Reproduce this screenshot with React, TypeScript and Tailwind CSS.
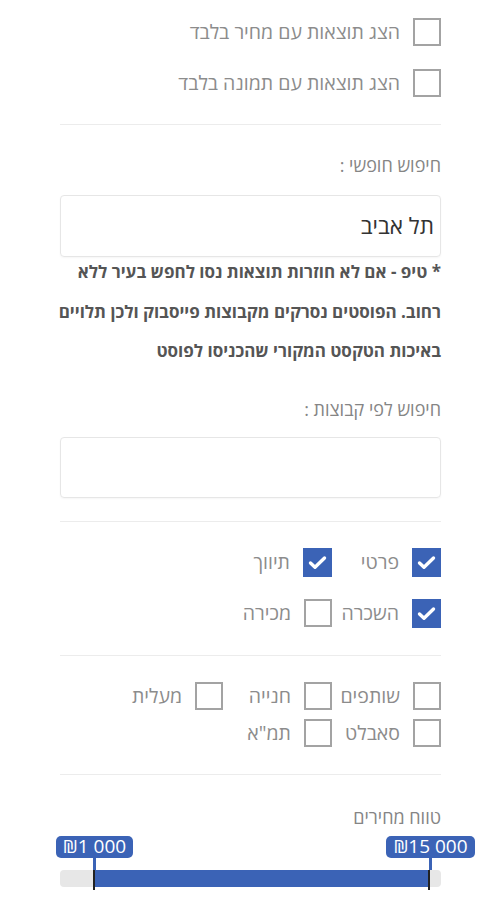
const font = { fontFamily: '"Open Sans", "Liberation Sans", Arial, sans-serif' };

function Box({ checked = false }: { checked?: boolean }) {
	if (checked) {
		return (
			<span className="flex h-[29px] w-[29px] shrink-0 items-center justify-center bg-[#3b63b6]">
				<svg width="19" height="15" viewBox="0 0 19 15" fill="none">
					<path d="M2.5 8l4.5 4.2L16.5 3" stroke="white" strokeWidth="3.4" strokeLinecap="round" strokeLinejoin="round" />
				</svg>
			</span>
		);
	}
	return <span className="block h-[28px] w-[28px] shrink-0 border-2 border-[#a3a3a3] bg-white" />;
}

function Check({ label, checked, wide }: { label: string; checked?: boolean; wide?: boolean }) {
	return (
		<label className={`flex h-[29px] items-center gap-[13px] ${wide ? "" : "w-[109px]"}`}>
			<Box checked={checked} />
			<span className="text-[19.5px] leading-[24px] text-[#8c8c8c] whitespace-nowrap">{label}</span>
		</label>
	);
}

function Divider() {
	return <hr className="border-0 border-t border-[#ececec]" />;
}

function PriceTag({ text, className }: { text: string; className: string }) {
	return (
		<div className={`absolute top-0 flex flex-col items-center ${className}`}>
			<div dir="ltr" className="flex h-[22px] items-center justify-center rounded-[5px] bg-[#3b63b6] px-[5px] text-[19px] text-white">
				{text}
			</div>
			<div className="h-[12px] w-[3px] bg-[#3b63b6]" />
		</div>
	);
}

export default function App() {
	return (
		<div dir="rtl" style={font} className="min-h-screen bg-white px-[60px] pt-[17px]">
			<div className="flex flex-col gap-[22px]">
				<Check label="הצג תוצאות עם מחיר בלבד" wide />
				<Check label="הצג תוצאות עם תמונה בלבד" wide />
			</div>

			<div className="mt-[27px]">
				<Divider />
			</div>

			<div className="mt-[28px] text-[18px] leading-[24px] text-[#858585]">חיפוש חופשי :</div>
			<div className="mt-[18px] flex h-[62px] items-center rounded-[4px] border border-[#e6e6e6] px-[6px] shadow-[0_1px_2px_rgba(0,0,0,0.04)]">
				<span className="text-[22.5px] text-[#333]">תל אביב</span>
			</div>

			<p className="ml-[-8px] mt-[-5px] text-[17px] font-bold leading-[39.5px] text-[#555]">
				* טיפ - אם לא חוזרות תוצאות נסו לחפש בעיר ללא רחוב. הפוסטים נסרקים מקבוצות פייסבוק ולכן תלויים באיכות הטקסט המקורי שהכניסו לפוסט
			</p>

			<div className="mt-[26px] text-[18px] leading-[24px] text-[#858585]">חיפוש לפי קבוצות :</div>
			<div className="mt-[16px] h-[61px] rounded-[4px] border border-[#e6e6e6] shadow-[0_1px_2px_rgba(0,0,0,0.04)]" />

			<div className="mt-[23px]">
				<Divider />
			</div>

			<div className="mt-[26px] flex flex-col gap-[22px]">
				<div className="flex">
					<Check label="פרטי" checked />
					<Check label="תיווך" checked />
				</div>
				<div className="flex">
					<Check label="השכרה" checked />
					<Check label="מכירה" />
				</div>
			</div>

			<div className="mt-[27px]">
				<Divider />
			</div>

			<div className="mt-[26px] flex flex-col gap-[8px]">
				<div className="flex">
					<Check label="שותפים" />
					<Check label="חנייה" />
					<Check label="מעלית" />
				</div>
				<div className="flex">
					<Check label="סאבלט" />
					<Check label='תמ"א' />
				</div>
			</div>

			<div className="mt-[26px]">
				<Divider />
			</div>

			<div className="mt-[30px] text-[18px] leading-[24px] text-[#858585]">טווח מחירים</div>

			<div dir="ltr" className="relative mt-[7px] h-[60px]">
				<PriceTag text="₪1 000" className="left-[-4px] [&>div:first-child]:w-[77px]" />
				<PriceTag text="₪15 000" className="right-[-34px] [&>div:first-child]:w-[89px]" />
				<div className="absolute left-0 right-0 top-[34px] h-[17px] rounded-[4px] bg-[#e7e7e7]" />
				<div className="absolute left-[33px] right-[11px] top-[34px] h-[17px] bg-[#3b63b6]" />
				<div className="absolute left-[33px] top-[34px] h-[20px] w-[2px] bg-[#222]" />
				<div className="absolute right-[11px] top-[34px] h-[20px] w-[2px] bg-[#222]" />
			</div>
		</div>
	);
}
